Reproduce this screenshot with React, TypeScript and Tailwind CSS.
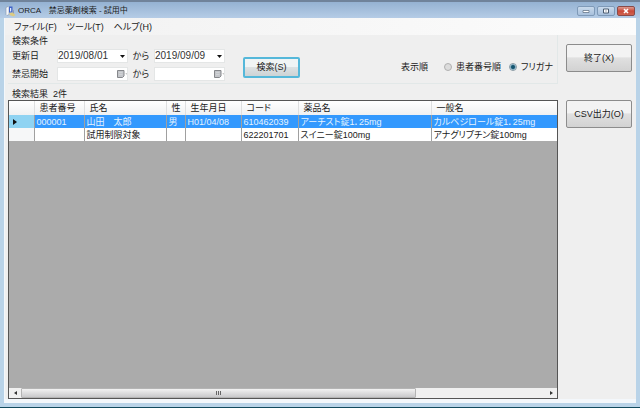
import { useState } from 'react';

type Row = {
  id: string;
  name: string;
  sex: string;
  birth: string;
  code: string;
  drug: string;
  generic: string;
};

const rows: Row[] = [
  {
    id: '000001',
    name: '山田　太郎',
    sex: '男',
    birth: 'H01/04/08',
    code: '610462039',
    drug: 'アーチスト錠1．25mg',
    generic: 'カルベジロール錠1．25mg',
  },
  {
    id: '',
    name: '試用制限対象',
    sex: '',
    birth: '',
    code: '622201701',
    drug: 'スイニー錠100mg',
    generic: 'アナグリプチン錠100mg',
  },
];

const columns: { key: keyof Row; label: string; width: string }[] = [
  { key: 'id', label: '患者番号', width: 'w-[50px]' },
  { key: 'name', label: '氏名', width: 'w-[82px]' },
  { key: 'sex', label: '性', width: 'w-[19px]' },
  { key: 'birth', label: '生年月日', width: 'w-[56px]' },
  { key: 'code', label: 'コード', width: 'w-[57px]' },
  { key: 'drug', label: '薬品名', width: 'w-[133px]' },
  { key: 'generic', label: '一般名', width: '' },
];

function AppIcon() {
  return (
    <svg viewBox="0 0 12 12" className="h-3 w-3 shrink-0">
      <path d="M2 2.500l2-1 1 1v7l-2 1-1-1z" fill="#f4f7fb" stroke="#8795ad" strokeWidth="0.600" />
      <path d="M5 1.500h3.500v6H5z" fill="#3f63c8" />
      <path d="M6 3h1.200v3.500H6z" fill="#dfe9ff" />
      <path d="M8.500 4.500l1.500 1v4l-1.500-1z" fill="#8a97b8" />
      <path d="M5.500 8l3-.5 3 2.500-2 1.500-4-1.500z" fill="#dccb83" />
    </svg>
  );
}

function CaptionButton({ label, close, children }: { label: string; close?: boolean; children: React.ReactNode }) {
  return (
    <button
      aria-label={label}
      className={
        close
          ? 'flex h-[10px] w-[18px] items-center justify-center rounded-[2px] border border-[#8a4a48] bg-linear-to-b from-[#dc9a90] via-[#c9493a] to-[#cf6350]'
          : 'flex h-[10px] w-[18px] items-center justify-center rounded-[2px] border border-[#7f9ab8] bg-linear-to-b from-[#c9daec] to-[#a8c0dc]'
      }
    >
      <svg viewBox="0 0 8 6" className="h-[6px] w-2">
        {children}
      </svg>
    </button>
  );
}

function DateField({ label, value }: { label: string; value?: string }) {
  return (
    <div className="flex h-[14px] w-[71px] items-center border border-[#e4e6e6] bg-white">
      <input
        type="text"
        aria-label={label}
        defaultValue={value}
        className="h-3 w-0 min-w-0 flex-1 bg-transparent text-[10px] leading-3 text-[#333] outline-none"
      />
      {value ? (
        <button aria-label={`${label} 選択`} className="flex w-[10px] items-center justify-center">
          <svg viewBox="0 0 5 3" className="h-[3px] w-[5px]">
            <path d="M0 0h5L2.5 3z" fill="#111" />
          </svg>
        </button>
      ) : (
        <button aria-label={`${label} 選択`} className="flex w-[10px] items-center">
          <svg viewBox="0 0 10 8" className="h-2 w-[10px]">
            <path d="M.5.5h6.500v5.500l-1.500 1.500h-5z" fill="#c3c5c9" stroke="#85878b" />
            <path d="M2 2.500h3.500M2 4.500h3.500" stroke="#d6d8db" strokeWidth="0.700" />
            <path d="M8.500 3.500h1.500l-.75 1z" fill="#777" />
          </svg>
        </button>
      )}
    </div>
  );
}

function OrderRadio({ label, checked, onChange }: { label: string; checked: boolean; onChange: () => void }) {
  return (
    <label className="flex items-center gap-1">
      <input
        type="radio"
        name="order"
        checked={checked}
        onChange={onChange}
        className="h-2 w-2 appearance-none rounded-full border border-[#b0b0b0] bg-[#dcdcdc] checked:border-[#8c9ca6] checked:bg-radial checked:from-[#12546f] checked:from-35% checked:to-[#b8dcec] checked:to-70%"
      />
      {label}
    </label>
  );
}

function SideButton({ children }: { children: React.ReactNode }) {
  return (
    <button className="h-7 w-full rounded-[2px] border border-[#8c8c8c] bg-linear-to-b from-[#f3f3f3] from-45% via-[#e0e0e0] via-50% to-[#d2d2d2]">
      {children}
    </button>
  );
}

export default function App() {
  const [order, setOrder] = useState('kana');

  return (
    <div className="flex min-h-screen flex-col border-t-2 border-b border-t-[#70839a] border-b-[#124a5e] bg-[#b9d3e8] font-['Liberation_Sans','Noto_Sans_CJK_JP',sans-serif] text-[9px] leading-3 text-[#1a1a1a] [font-feature-settings:'palt']">
      <header className="flex h-4 items-center gap-[2px] bg-linear-to-b from-[#95b2d2] to-[#b5cce6] pt-px pr-[5px] pl-1">
        <AppIcon />
        <h1 className="flex-1 text-[8px] whitespace-pre">ORCA　禁忌薬剤検索 - 試用中</h1>
        <div className="flex gap-[2px]">
          <CaptionButton label="最小化">
            <path d="M1 2.500h6v2H1z" fill="#fff" stroke="#58687c" strokeWidth="0.700" />
          </CaptionButton>
          <CaptionButton label="最大化">
            <path d="M1.500 1h5v4h-5z" fill="#fff" stroke="#4a5a6e" />
            <path d="M3.500 2.500h1v1h-1z" fill="#4a5a6e" />
          </CaptionButton>
          <CaptionButton label="閉じる" close>
            <path d="M2 1l4 4M6 1L2 5" stroke="#fff" strokeWidth="1.600" />
          </CaptionButton>
        </div>
      </header>

      <div className="mr-1 mb-1 ml-1 flex flex-1 flex-col border-b-4 border-l border-[#f3f7fb] bg-[#efefef]">
        <nav className="flex h-[17px] items-center gap-[10px] bg-linear-to-r from-[#f1f1f1] to-[#fcfcfc] pl-[9px]">
          <button>ファイル(F)</button>
          <button>ツール(T)</button>
          <button>ヘルプ(H)</button>
        </nav>

        <main className="flex flex-1 gap-2 pr-1 pl-[3px]">
          <div className="flex min-w-0 flex-1 flex-col">
            <section className="border-r border-b border-[#e2e8e8] pl-1">
              <h2>検索条件</h2>
              <div className="flex h-9 items-center">
                <div className="flex flex-col gap-1">
                  <div className="flex items-center">
                    <span className="w-[45px]">更新日</span>
                    <DateField label="更新日 開始" value="2019/08/01" />
                    <span className="w-[26px] text-center">から</span>
                    <DateField label="更新日 終了" value="2019/09/09" />
                  </div>
                  <div className="flex items-center">
                    <span className="w-[45px]">禁忌開始</span>
                    <DateField label="禁忌開始 開始" />
                    <span className="w-[26px] text-center">から</span>
                    <DateField label="禁忌開始 終了" />
                  </div>
                </div>
                <div className="flex flex-1 items-center justify-between pt-1 pr-1 pl-[18px]">
                  <button className="h-[21px] w-[57px] rounded-[2px] border-2 border-[#55b8da] bg-linear-to-b from-[#f0f4f5] from-45% via-[#dce1e3] via-50% to-[#cdd3d5]">
                    検索(S)
                  </button>
                  <div role="radiogroup" aria-label="表示順" className="flex items-center gap-2">
                    <span className="mr-2">表示順</span>
                    <OrderRadio label="患者番号順" checked={order === 'id'} onChange={() => setOrder('id')} />
                    <OrderRadio label="フリガナ" checked={order === 'kana'} onChange={() => setOrder('kana')} />
                  </div>
                </div>
              </div>
            </section>

            <section className="flex flex-1 flex-col pt-1">
              <h2 className="pl-1">検索結果&nbsp; 2件</h2>
              <div className="flex flex-1 flex-col border border-[#555] bg-[#ababab]">
                <table className="w-full table-fixed border-collapse bg-white text-left">
                  <thead>
                    <tr className="h-[14px] bg-linear-to-b from-white to-[#f0f1f2]">
                      <th className="w-[25px] border-r border-[#dedfe0]" aria-label="選択" />
                      {columns.map((c) => (
                        <th
                          key={c.key}
                          className={`${c.width} border-r border-[#dedfe0] pl-[5px] font-normal whitespace-nowrap last:border-r-0`}
                        >
                          {c.label}
                        </th>
                      ))}
                    </tr>
                  </thead>
                  <tbody>
                    {rows.map((r, i) => (
                      <tr key={r.code} className={i === 0 ? 'h-[13px] bg-[#3399fe] text-[#e6f3ff]' : 'h-[13px]'}>
                        <td className={i === 0 ? 'border-r border-[#a0a0a0] bg-[#8fd3f2] pl-1' : 'border-r border-[#a0a0a0] bg-[#f6f7f8]'}>
                          {i === 0 && (
                            <svg viewBox="0 0 4 6" className="h-[6px] w-1">
                              <path d="M0 0l4 3-4 3z" fill="#111" />
                            </svg>
                          )}
                        </td>
                        {columns.map((c) => (
                          <td key={c.key} className="border-r border-[#a0a0a0] pl-[2px] whitespace-nowrap last:border-r-0">
                            {r[c.key]}
                          </td>
                        ))}
                      </tr>
                    ))}
                  </tbody>
                </table>

                {/* horizontal scrollbar */}
                <div className="mt-auto flex h-[10px] items-center bg-[#f0f0f0]">
                  <button aria-label="左へ" className="flex h-full w-3 items-center justify-center">
                    <svg viewBox="0 0 3 4" className="h-1 w-[3px]">
                      <path d="M3 0v4L0 2z" fill="#333" />
                    </svg>
                  </button>
                  <div className="flex h-full w-[72%] items-center justify-center rounded-[1px] border border-[#b4b4b4] bg-linear-to-b from-[#f2f2f2] to-[#c9c9cb]">
                    <svg viewBox="0 0 5 4" className="h-1 w-[5px]">
                      <path d="M.5 0v4M2.500 0v4M4.500 0v4" stroke="#666" />
                    </svg>
                  </div>
                  <button aria-label="右へ" className="ml-auto flex h-full w-3 items-center justify-center">
                    <svg viewBox="0 0 3 4" className="h-1 w-[3px]">
                      <path d="M0 0v4l3-2z" fill="#333" />
                    </svg>
                  </button>
                </div>
              </div>
            </section>
          </div>

          <aside className="flex w-[66px] shrink-0 flex-col gap-7 pt-[9px]">
            <SideButton>終了(X)</SideButton>
            <SideButton>CSV出力(O)</SideButton>
          </aside>
        </main>
      </div>
    </div>
  );
}
